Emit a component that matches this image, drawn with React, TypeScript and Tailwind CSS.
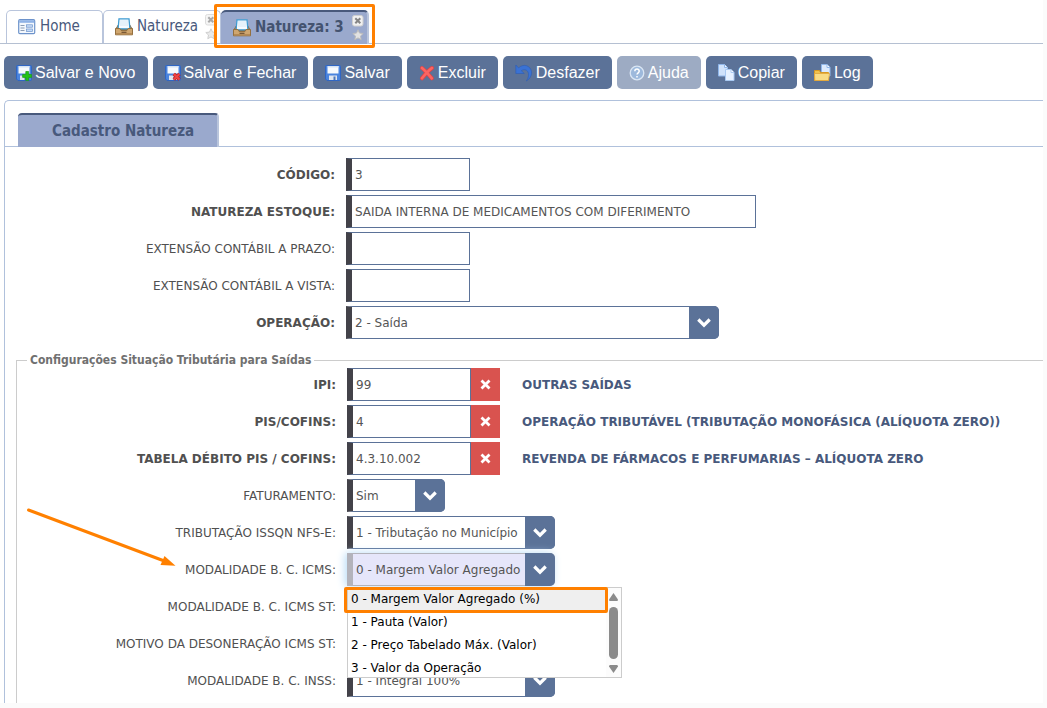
import { useId, type ReactNode } from "react";

function FormIcon() {
  return (
    <svg width="18" height="16" viewBox="0 0 18 16" aria-hidden="true">
      <rect x="0.7" y="0.7" width="16" height="14" rx="1.2" fill="#f4f8fd" stroke="#6d93cb" strokeWidth="1.2" />
      <rect x="1.200" y="1.200" width="15" height="2.600" fill="#8fb2e6" />
      <path d="M2.500 6.500h4M2.500 9h4M2.500 11.500h4" stroke="#8b9cb5" />
      <rect x="8.500" y="5.800" width="6" height="2.400" fill="#c3daf7" stroke="#6d93cb" strokeWidth="0.700" />
      <rect x="8.500" y="10" width="6" height="2.400" fill="#c3daf7" stroke="#6d93cb" strokeWidth="0.700" />
    </svg>
  );
}

function TrayIcon() {
  return (
    <svg width="18" height="18" viewBox="0 0 18 18" aria-hidden="true">
      <path d="M3.500 6.500 .6 11.500h16.800l-2.900-5z" fill="#a98558" stroke="#8a6a42" />
      <path d="M4 .8h10l.9 10H3.100z" fill="#f6fbff" stroke="#3d9bd2" strokeWidth="1.300" />
      <path d="M5 3h8M5 5h8M5 7h8" stroke="#d5e8f5" />
      <path d="M.5 10.500h4.300l1.200 2h6l1.200-2h4.300v6.300H.5z" fill="#cfa66f" stroke="#94703f" />
      <path d="M1 15h16v1.500H1z" fill="#b58a54" />
      <path d="M6.500 14.300h5" stroke="#6f5030" strokeWidth="1.200" />
    </svg>
  );
}

function DiskShape() {
  return (
    <>
      <path d="M.5 1.500a1 1 0 0 1 1-1h13a1 1 0 0 1 1 1v13a1 1 0 0 1-1 1H2l-1.500-1.500z" fill="#4a84de" stroke="#2f66c4" />
      <path d="M2.500 1h11v7.500h-11z" fill="#f7fafd" />
      <path d="M3 1h10.500v1.500H3z" fill="#d5e2f2" />
      <path d="M4 10.500h8V15H4z" fill="#dfe5ee" />
      <path d="M8.500 11.500h2V15h-2z" fill="#4b76ba" />
    </>
  );
}

function DiskIcon() {
  return (
    <svg width="16" height="16" viewBox="0 0 16 16" aria-hidden="true">
      <DiskShape />
    </svg>
  );
}

function DiskAddIcon() {
  return (
    <svg width="16" height="16" viewBox="0 0 16 16" aria-hidden="true">
      <DiskShape />
      <path d="M9.800 6.500h2.800v3h3v2.900h-3v3.200H9.800v-3.200H6.600V9.500h3.200z" fill="#22c316" stroke="#1c9c16" strokeWidth="0.700" />
    </svg>
  );
}

function DiskCloseIcon() {
  return (
    <svg width="16" height="16" viewBox="0 0 16 16" aria-hidden="true">
      <DiskShape />
      <path d="m8.800 9 5.700 5.500M14.500 9l-5.700 5.500" stroke="#c21d1d" strokeWidth="3.400" />
      <path d="m8.800 9 5.700 5.500M14.500 9l-5.700 5.500" stroke="#ee4444" strokeWidth="2" />
    </svg>
  );
}

function DeleteIcon() {
  return (
    <svg width="16" height="16" viewBox="0 0 16 16" aria-hidden="true">
      <path d="M3 3c3 2.500 6.500 6.500 9.800 10.300M13 3C9.500 5.500 6 9.500 3 13.300" fill="none" stroke="#e04446" strokeWidth="4" strokeLinecap="round" />
      <path d="M3 3c3 2.500 6.500 6.500 9.800 10.300M13 3C9.500 5.500 6 9.500 3 13.300" fill="none" stroke="#fb6562" strokeWidth="2.600" strokeLinecap="round" />
    </svg>
  );
}

function UndoIcon() {
  return (
    <svg width="18" height="18" viewBox="0 0 18 18" aria-hidden="true">
      <path d="M.8 1v8.500h8.500L6.300 6.700c3-2.200 8-.8 7.200 5-.2 2-1 3.600-2.200 5.300 3.500-2 5.700-5.500 5.200-9.200C15.800 1.500 8.200-.8 3.600 3.900z" fill="#3a72d4" stroke="#2c5db6" strokeWidth="0.600" />
    </svg>
  );
}

function HelpIcon() {
  return (
    <svg width="16" height="16" viewBox="0 0 16 16" aria-hidden="true">
      <circle cx="8" cy="8" r="6.800" fill="#9db9dc" stroke="#dae6f4" strokeWidth="1.300" />
      <path d="M5.800 6.300c.1-3 4.500-2.800 4.400-.1 0 1.600-2.200 1.600-2.200 3.400M8 11v1.600" fill="none" stroke="#fff" strokeWidth="1.500" />
    </svg>
  );
}

function CopyIcon() {
  return (
    <svg width="17" height="17" viewBox="0 0 17 17" aria-hidden="true">
      <path d="M.5.500h6l3 3V12h-9z" fill="#cfe2fb" stroke="#8fb6ea" />
      <path d="M6.500.500v3h3" fill="#eef6ff" stroke="#8fb6ea" />
      <path d="M7.500 5.500h5.500l3 3v8H7.500z" fill="#e6f1ff" stroke="#a9c9f2" />
      <path d="M13 5.500v3h3" fill="#fff" stroke="#a9c9f2" />
    </svg>
  );
}

function LogIcon() {
  return (
    <svg width="17" height="17" viewBox="0 0 17 17" aria-hidden="true">
      <path d="M7.500.500h5.500l3 3v8.500H7.500z" fill="#dceafd" stroke="#8fb6ea" />
      <path d="M13 .5v3h3" fill="#fff" stroke="#8fb6ea" />
      <path d="M.5 6.500h5l1 2h8v8H.5z" fill="#f1c34d" stroke="#d99a22" />
      <path d="M.5 9.500h15l-1 7H.8z" fill="#f9dc85" stroke="#e0a53a" strokeWidth="0.800" />
    </svg>
  );
}

function CloseIcon() {
  return (
    <svg width="12" height="12" viewBox="0 0 12 12" aria-hidden="true">
      <rect x="0.500" y="0.500" width="10.500" height="10.500" rx="2" fill="#f1f1f1" stroke="#cfcfcf" />
      <path d="m3.300 3.300 5 5M8.300 3.300l-5 5" stroke="#858585" strokeWidth="2" />
    </svg>
  );
}

function StarIcon() {
  return (
    <svg width="12" height="12" viewBox="0 0 12 12" aria-hidden="true">
      <path d="m6 .8 1.500 3.300 3.700.4-2.700 2.500.7 3.700L6 8.900l-3.200 1.800.7-3.700L.8 4.500l3.700-.4z" fill="#e2e2e2" stroke="#bbb" />
    </svg>
  );
}

function Chevron() {
  return (
    <svg width="16" height="12" viewBox="0 0 16 12" aria-hidden="true">
      <path d="m2.300 2.500 5.700 5.700 5.700-5.700" fill="none" stroke="#fff" strokeWidth="3.200" />
    </svg>
  );
}

function TabTools({ faded }: { faded?: boolean }) {
  return (
    <span className={`flex flex-col gap-0.5 ${faded ? "opacity-70" : ""}`}>
      <button type="button" aria-label="Fechar aba">
        <CloseIcon />
      </button>
      <button type="button" aria-label="Favoritar">
        <StarIcon />
      </button>
    </span>
  );
}

const toolbar: { label: string; icon: ReactNode; disabled?: boolean }[] = [
  { label: "Salvar e Novo", icon: <DiskAddIcon /> },
  { label: "Salvar e Fechar", icon: <DiskCloseIcon /> },
  { label: "Salvar", icon: <DiskIcon /> },
  { label: "Excluir", icon: <DeleteIcon /> },
  { label: "Desfazer", icon: <UndoIcon /> },
  { label: "Ajuda", icon: <HelpIcon />, disabled: true },
  { label: "Copiar", icon: <CopyIcon /> },
  { label: "Log", icon: <LogIcon /> },
];

const icmsOptions = [
  "0 - Margem Valor Agregado (%)",
  "1 - Pauta (Valor)",
  "2 - Preço Tabelado Máx. (Valor)",
  "3 - Valor da Operação",
];

const fieldBase = "h-[33px] border border-l-[6px] border-[#5b7298] border-l-[#434249] bg-white pl-[3px] text-[#555] outline-none";

type RowProps = { id: string; label: string; bold?: boolean; labelWidth: string; children: ReactNode };

function Row({ id, label, bold, labelWidth, children }: RowProps) {
  return (
    <div className="flex items-center gap-[11px]">
      <label htmlFor={id} className={`${labelWidth} shrink-0 text-right whitespace-nowrap text-[#505050] ${bold ? "font-bold" : ""}`}>
        {label}
      </label>
      {children}
    </div>
  );
}

const upper = "w-[330px]";
const lower = "w-[319px]";

function TextRow({ label, value, width, bold }: { label: string; value: string; width: string; bold?: boolean }) {
  const id = useId();
  return (
    <Row id={id} label={label} bold={bold} labelWidth={upper}>
      <input id={id} type="text" defaultValue={value} className={`${fieldBase} ${width}`} />
    </Row>
  );
}

function LookupRow({ label, value, description }: { label: string; value: string; description: string }) {
  const id = useId();
  return (
    <Row id={id} label={label} bold labelWidth={lower}>
      <div className="flex items-center">
        <input id={id} type="text" defaultValue={value} className={`${fieldBase} w-[124px]`} />
        <button type="button" aria-label="Limpar" className="flex h-[33px] w-[29px] items-center justify-center bg-[#d9534f]">
          <svg width="12" height="12" viewBox="0 0 12 12" aria-hidden="true">
            <path d="m1.500 1.500 8 8M9.500 1.500l-8 8" stroke="#fff" strokeWidth="2.800" />
          </svg>
        </button>
        <span className="ml-[22px] font-bold whitespace-nowrap text-[#48597c]">{description}</span>
      </div>
    </Row>
  );
}

type SelectRowProps = {
  label: string;
  options: string[];
  width: string;
  bold?: boolean;
  labelWidth: string;
  active?: boolean;
  children?: ReactNode;
};

function SelectRow({ label, options, width, bold, labelWidth, active, children }: SelectRowProps) {
  const id = useId();
  return (
    <Row id={id} label={label} bold={bold} labelWidth={labelWidth}>
      <div className={`relative grid ${width}`}>
        <select
          id={id}
          className={
            active
              ? "col-start-1 row-start-1 h-[33px] w-full appearance-none rounded-r-[5px] border border-l-[6px] border-[#b3b3bb] bg-[#e6e6fa] pr-[31px] pl-[3px] text-[#555] shadow-[-2px_0_8px_#b9dcf7] outline-none"
              : `${fieldBase} col-start-1 row-start-1 w-full appearance-none rounded-r-[5px] pr-[31px]`
          }
        >
          {options.map((o) => (
            <option key={o}>{o}</option>
          ))}
        </select>
        <span className="pointer-events-none z-0 col-start-1 row-start-1 flex w-[30px] items-center justify-center justify-self-end rounded-r-[5px] bg-[#5b7298]">
          <Chevron />
        </span>
        {children}
      </div>
    </Row>
  );
}

function OptionList() {
  return (
    <div className="absolute top-full left-0 z-10 mt-px flex h-[91px] w-[275px] border border-[#ccc] bg-white">
      <ul role="listbox" aria-label="Modalidade B. C. ICMS" className="flex-1 overflow-hidden text-black">
        {icmsOptions.map((o, i) => (
          <li
            key={o}
            role="option"
            aria-selected={i === 0}
            className={`h-[23px] pl-[3px] leading-[23px] whitespace-nowrap ${i === 0 ? "bg-[#efefef]" : ""}`}
          >
            {o}
          </li>
        ))}
      </ul>
      <div className="flex w-[15px] flex-col items-center bg-[#fcfcfc] pt-[5px]">
        <svg width="9" height="8" viewBox="0 0 9 8" aria-hidden="true">
          <path d="M4.500 0 9 6.500Q9 8 8 8H1Q0 8 0 6.500z" fill="#8b8b8b" />
        </svg>
        <span className="my-[6px] h-[52px] w-[9px] rounded-full bg-[#8b8b8b]" />
        <svg width="9" height="8" viewBox="0 0 9 8" aria-hidden="true">
          <path d="M4.500 8 9 1.500Q9 0 8 0H1Q0 0 0 1.500z" fill="#8b8b8b" />
        </svg>
      </div>
      <div className="pointer-events-none absolute -top-px -left-1 h-[26px] w-[264px] rounded-[2px] border-[3px] border-[#ff8000]" />
    </div>
  );
}

export default function App() {
  return (
    <div className="min-h-screen overflow-hidden bg-[#fbfbfb] pr-1 pb-[5px] font-['DejaVu_Sans',sans-serif] text-xs">
      <main className="bg-white">
        <nav
          aria-label="Abas"
          className="flex h-11 items-end border-b border-[#b5c0d2] pl-[6px] font-['DejaVu_Sans_Condensed','DejaVu_Sans',sans-serif] text-[15px] text-[#48597c]"
        >
          <div className="flex h-[33px] w-[97px] items-center rounded-t-[5px] border border-b-0 border-[#b9c5dc] pl-[11px]">
            <a href="#home" className="flex items-center gap-1">
              <FormIcon />
              Home
            </a>
          </div>
          <div className="flex h-[33px] w-[118px] items-center justify-between rounded-t-[5px] border border-b-0 border-[#b9c5dc] pr-[3px] pl-[11px]">
            <a href="#natureza" className="flex items-center gap-1">
              <TrayIcon />
              Natureza
            </a>
            <TabTools faded />
          </div>
          <div className="relative -mb-px flex h-[34px] w-[148px] items-center justify-between rounded-t-[5px] border-t-2 border-r-2 border-t-[#48597c] border-r-[#b9c5dc] bg-[#9aa9cd] pr-[3px] pl-3">
            <a href="#natureza-3" aria-current="page" className="flex items-center gap-1 font-bold whitespace-nowrap text-[#445370]">
              <TrayIcon />
              Natureza: 3
            </a>
            <TabTools />
            <div className="pointer-events-none absolute -top-2 -right-2 -bottom-1 -left-[7px] rounded-[2px] border-[3px] border-[#ff8000]" />
          </div>
        </nav>

        <div className="flex gap-[5px] px-1 pt-3 pb-[11px] font-['Liberation_Sans',Arial,sans-serif] text-base text-white">
          {toolbar.map(({ label, icon, disabled }) => (
            <button
              key={label}
              type="button"
              disabled={disabled}
              className={`flex h-[33px] items-center gap-[3px] rounded-[5px] px-3 whitespace-nowrap ${disabled ? "bg-[#9dabc3]" : "bg-[#5b7298]"}`}
            >
              {icon}
              {label}
            </button>
          ))}
        </div>

        <section className="ml-1 rounded-tl-[5px] border-t border-l border-[#b0c1dc]">
          <div className="flex border-b border-[#b0c1dc] pt-3 pl-[13px]">
            <h1 className="-mb-px h-[34px] rounded-t-[4px] border-t-2 border-r-2 border-t-[#48597c] border-r-[#b9c5dc] bg-[#9aa9cd] pr-[23px] pl-[34px] font-['DejaVu_Sans_Condensed','DejaVu_Sans',sans-serif] text-[15px] leading-8 font-bold text-[#48597c]">
              Cadastro Natureza
            </h1>
          </div>

          <form className="pt-[11px]">
            <div className="flex flex-col gap-1">
              <TextRow label="CÓDIGO:" value="3" width="w-[124px]" bold />
              <TextRow label="NATUREZA ESTOQUE:" value="SAIDA INTERNA DE MEDICAMENTOS COM DIFERIMENTO" width="w-[410px]" bold />
              <TextRow label="EXTENSÃO CONTÁBIL A PRAZO:" value="" width="w-[124px]" />
              <TextRow label="EXTENSÃO CONTÁBIL A VISTA:" value="" width="w-[124px]" />
              <SelectRow label="OPERAÇÃO:" options={["2 - Saída"]} width="w-[373px]" bold labelWidth={upper} />
            </div>

            <fieldset className="mt-[13px] ml-[11px] border-t border-l border-[#ccc] pb-[6px]">
              <legend className="ml-[10px] px-[3px] font-['DejaVu_Sans_Condensed','DejaVu_Sans',sans-serif] leading-4 font-bold text-[#707070]">
                Configurações Situação Tributária para Saídas
              </legend>
              <div className="flex flex-col gap-1">
                <LookupRow label="IPI:" value="99" description="OUTRAS SAÍDAS" />
                <LookupRow label="PIS/COFINS:" value="4" description="OPERAÇÃO TRIBUTÁVEL (TRIBUTAÇÃO MONOFÁSICA (ALÍQUOTA ZERO))" />
                <LookupRow label="TABELA DÉBITO PIS / COFINS:" value="4.3.10.002" description="REVENDA DE FÁRMACOS E PERFUMARIAS – ALÍQUOTA ZERO" />
                <SelectRow label="FATURAMENTO:" options={["Sim", "Não"]} width="w-[98px]" labelWidth={lower} />
                <SelectRow label="TRIBUTAÇÃO ISSQN NFS-E:" options={["1 - Tributação no Município"]} width="w-[208px]" labelWidth={lower} />
                <SelectRow label="MODALIDADE B. C. ICMS:" options={icmsOptions} width="w-[208px]" labelWidth={lower} active>
                  <OptionList />
                  <svg className="pointer-events-none absolute -top-[46px] -left-[322px]" width="152" height="62" viewBox="0 0 152 62" aria-hidden="true">
                    <path d="M3.500 3 138 53.500" stroke="#ff8000" strokeWidth="3" strokeLinecap="round" />
                    <path d="m139.500 49 11 9.800-15-.8z" fill="#ff8000" />
                  </svg>
                </SelectRow>
                <SelectRow label="MODALIDADE B. C. ICMS ST:" options={[""]} width="w-[208px]" labelWidth={lower} />
                <SelectRow label="MOTIVO DA DESONERAÇÃO ICMS ST:" options={[""]} width="w-[208px]" labelWidth={lower} />
                <SelectRow label="MODALIDADE B. C. INSS:" options={["1 - Integral 100%"]} width="w-[208px]" labelWidth={lower} />
              </div>
            </fieldset>
          </form>
        </section>
      </main>
    </div>
  );
}
